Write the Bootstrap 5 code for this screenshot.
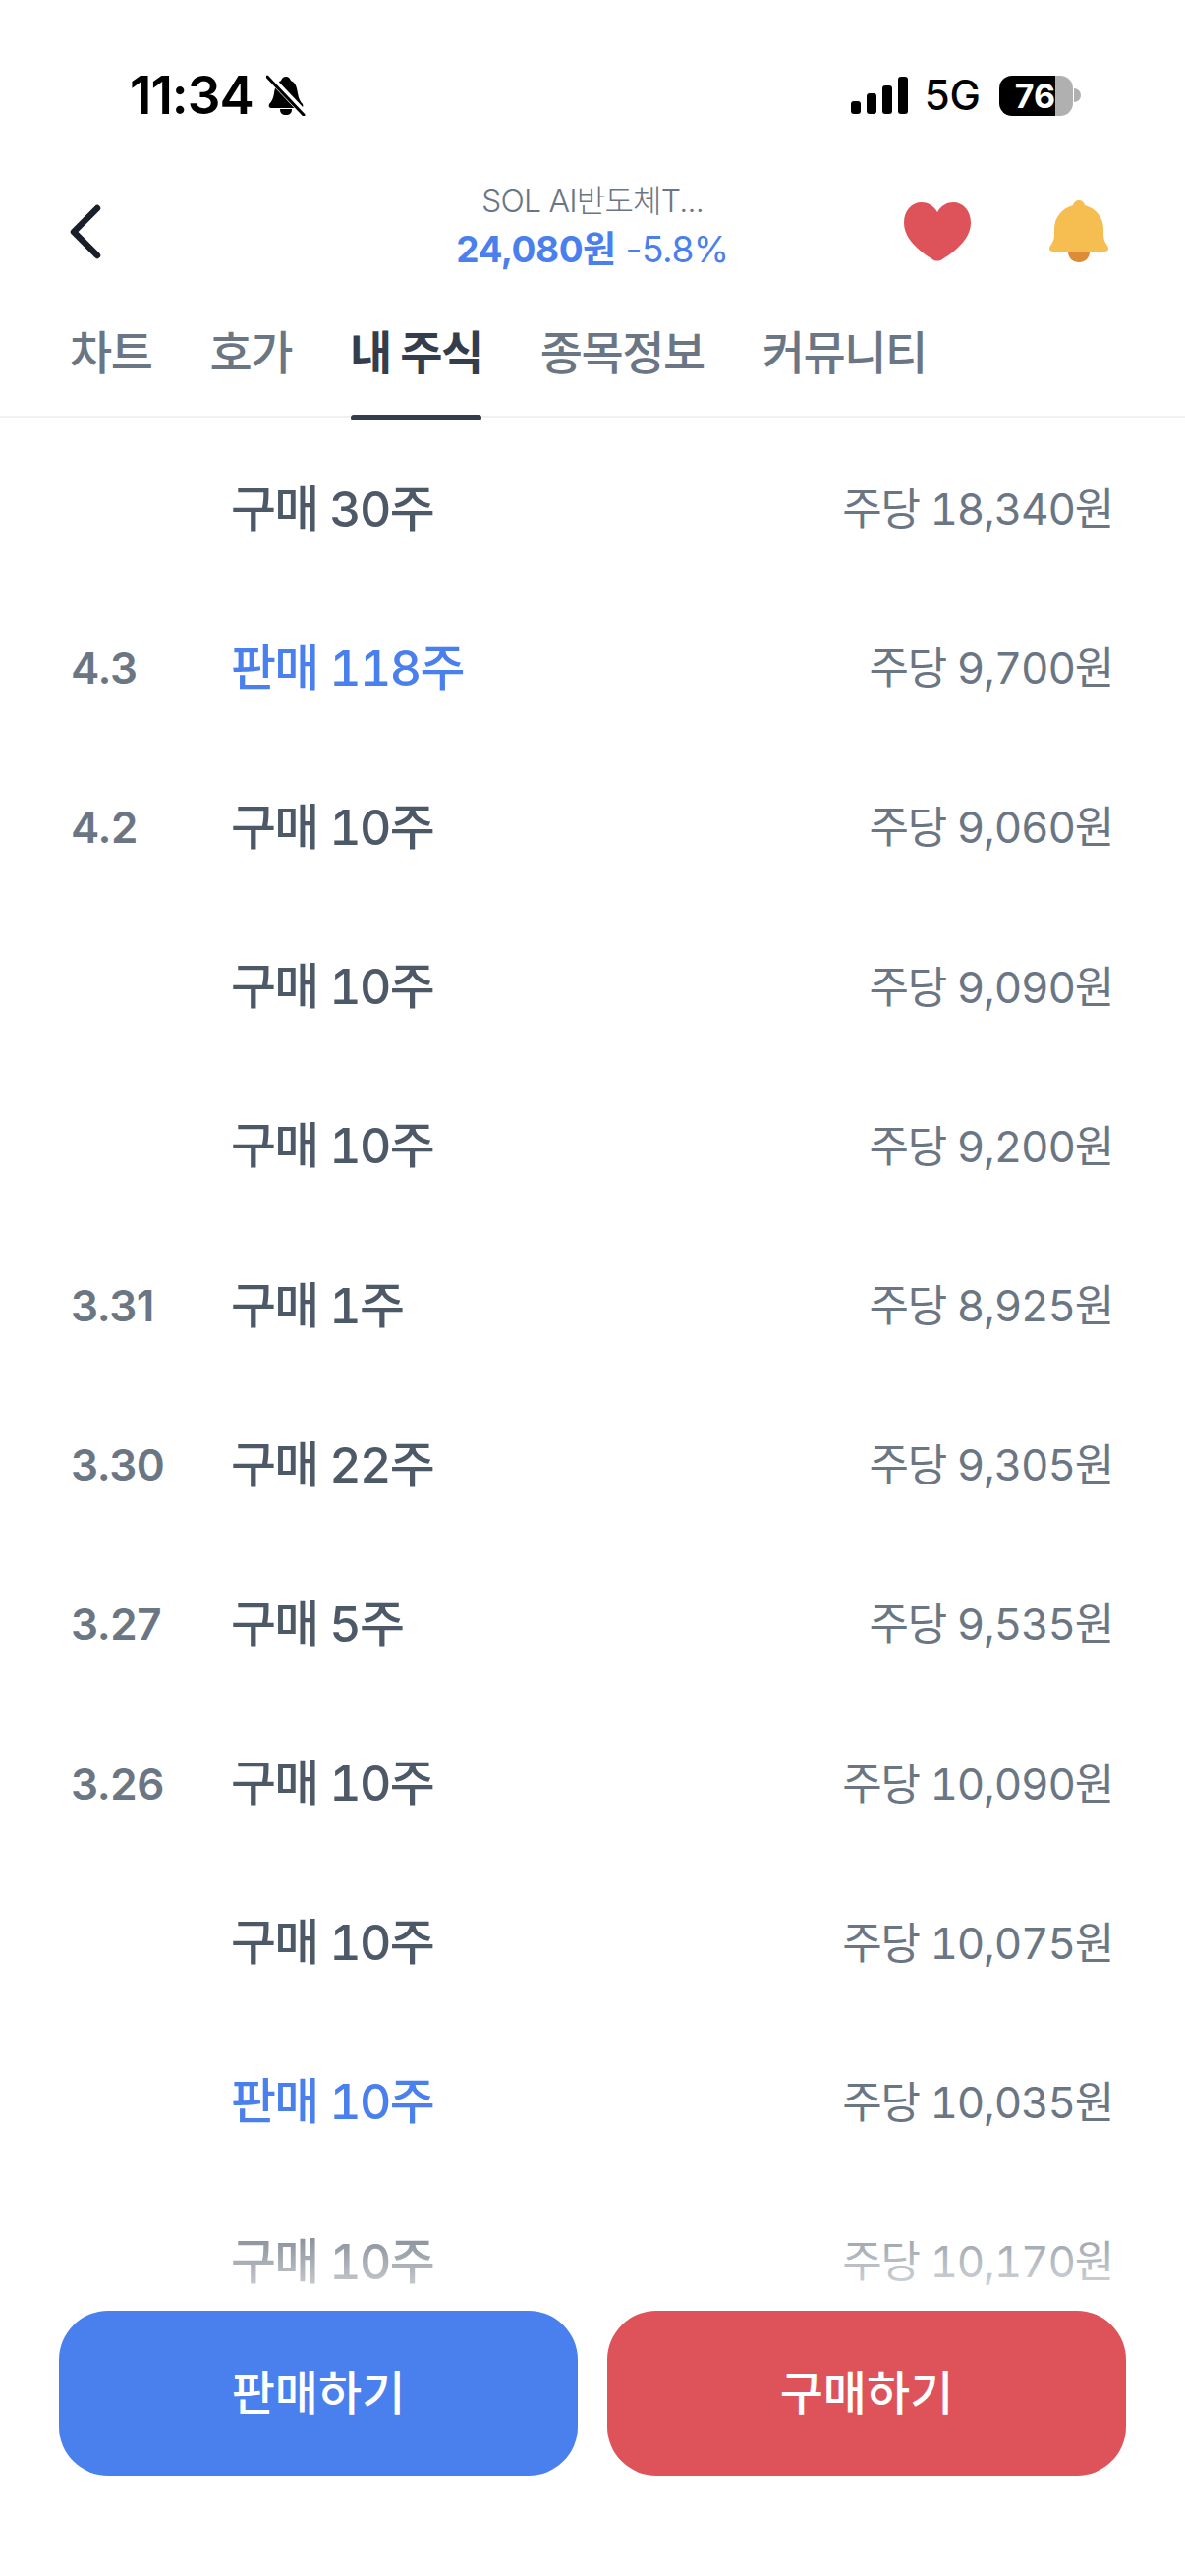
<!DOCTYPE html>
<html lang="ko">
<head>
  <meta charset="UTF-8" />
  <meta name="viewport" content="width=device-width, initial-scale=1.0"/>
  <title>내 주식</title>
  <link href="https://cdn.jsdelivr.net/npm/bootstrap@5.3.0/dist/css/bootstrap.min.css" rel="stylesheet"/>
  <style>
    body {
      font-family: Inter, "Noto Sans CJK KR", sans-serif;
      background: #fff;
      width: 1206px;
      height: 2622px;
      overflow: hidden;
      position: relative;
    }
    .status-bar { height: 169px; padding: 72px 106px 0 132px; }
    .status-time { font-size: 53px; font-weight: 600; line-height: 50px; letter-spacing: -1px; color: #000; margin-right: 13px; }
    .status-net { font-size: 42px; font-weight: 500; line-height: 50px; color: #000; margin: 0 19px 0 17px; }
    .battery {
      width: 75px; height: 41px; border-radius: 13px; font-size: 34px; font-weight: 700; line-height: 41px;
      color: #fff; padding-right: 18px; text-align: right;
      background: linear-gradient(90deg, #000 76%, #b0b0b0 76%);
    }
    .battery-tip { width: 7px; height: 14px; background: #b0b0b0; border-radius: 0 7px 7px 0; margin-left: 1px; }
    .top-bar { height: 134px; padding: 0 78px 0 71px; }
    .stock-name { font-size: 32px; line-height: 44px; font-weight: 300; color: #6b7684; letter-spacing: -.8px; }
    .stock-price { font-size: 37px; line-height: 54px; color: #4a80ed; letter-spacing: -.5px; }
    .stock-price b { font-weight: 700; }
    .stock-center { left: 0; right: 0; top: 14px; }
    .tab-bar { height: 122px; border-bottom: 2px solid #f0f1f3; padding: 0 71px; gap: 59px; }
    .tab-item { font-size: 47px; line-height: 56px; height: 122px; padding-top: 28px; font-weight: 500; color: #6b7684; position: relative; letter-spacing: -1.5px; }
    .tab-item.active-tab { color: #333d4b; font-weight: 700; }
    .tab-item.active-tab::after {
      content: ""; position: absolute; left: 1px; right: 1px; bottom: -3px; height: 6px; background: #333d4b; border-radius: 3px;
    }
    .trade-list { padding-top: 12px; }
    .trade-row { height: 162.2px; padding: 0 73px 0 72px; }
    .trade-date { width: 163px; font-size: 44px; font-weight: 600; color: #6b7684; letter-spacing: -.4px; }
    .trade-name { font-size: 50px; font-weight: 500; color: #4e5968; letter-spacing: -1.7px; font-variant-numeric: tabular-nums; }
    .trade-sell { color: #4a80ed; }
    .trade-price { font-size: 44px; font-weight: 400; color: #6b7684; letter-spacing: -1.2px; font-variant-numeric: tabular-nums; }
    .footer-fade { position: absolute; left: 0; right: 0; top: 2227px; height: 147px; background: linear-gradient(180deg, rgba(255,255,255,0), #fff); }
    .footer-bar { position: absolute; left: 0; right: 0; top: 2352px; bottom: 0; background: #fff; padding: 0 60px; gap: 30px; }
    .order-btn {
      flex: 1; height: 168px; border: 0; border-radius: 50px; font-size: 48px; font-weight: 500; color: #fff;
    }
    .order-sell { background: #4a80ed; }
    .order-buy { background: #de5359; }
    .order-btn:hover, .order-btn:active { color: #fff; }
    .order-sell:hover { background: #4a80ed; }
    .order-buy:hover { background: #de5359; }
    .header-icons { gap: 80px; }
  </style>
</head>
<body>

  <!-- Status bar -->
  <div class="status-bar d-flex align-items-start justify-content-between">
    <div class="d-flex align-items-center">
      <span class="status-time">11:34</span>
      <svg width="40" height="42" viewBox="0 0 40 42">
        <path d="M20 2c3 0 4 2 5 4 5 2 6 7 7 13 1 5 2 8 5 11 1 2 0 4-2 4H5c-2 0-3-2-2-4 3-3 4-6 5-11 1-6 2-11 7-13 1-2 2-4 5-4z" fill="#000"/>
        <path d="M14 35h12c0 4-2 6-6 6s-6-2-6-6z" fill="#000"/>
        <path d="M2 1 39 40" stroke="#fff" stroke-width="7"/>
        <path d="M1 2 38 41" stroke="#000" stroke-width="3" stroke-linecap="round"/>
      </svg>
    </div>
    <div class="d-flex align-items-center">
      <svg width="58" height="38" viewBox="0 0 58 38" fill="#000">
        <rect x="0" y="25" width="10" height="13" rx="3"/>
        <rect x="16" y="17" width="10" height="21" rx="3"/>
        <rect x="32" y="9" width="10" height="29" rx="3"/>
        <rect x="48" y="0" width="10" height="38" rx="3"/>
      </svg>
      <span class="status-net">5G</span>
      <span class="battery">76</span>
      <span class="battery-tip"></span>
    </div>
  </div>

  <!-- Stock header -->
  <div class="top-bar d-flex align-items-center justify-content-between position-relative">
    <svg width="32" height="56" viewBox="0 0 32 56" fill="none">
      <path d="M28 4 4 28l24 24" stroke="#191f28" stroke-width="6.5" stroke-linecap="round" stroke-linejoin="round"/>
    </svg>
    <div class="stock-center position-absolute text-center">
      <div class="stock-name">SOL AI반도체T...</div>
      <div class="stock-price"><b>24,080원</b> -5.8%</div>
    </div>
    <div class="header-icons d-flex align-items-center position-relative">
      <svg width="68" height="60" viewBox="0 0 68 60">
        <path d="M34 10C30 3 24 0 18 0 8 0 0 8 0 21c0 16 16 29 29 37 3 2 7 2 10 0 13-8 29-21 29-37C68 8 60 0 50 0c-6 0-12 3-16 10z" fill="#de5359"/>
      </svg>
      <svg width="60" height="64" viewBox="0 0 60 64">
        <path d="M19 52h22c0 7-5 11-11 11s-11-4-11-11z" fill="#dc8c35"/>
        <path d="M30 0c3 0 5.500 2 6 5C47 8 55 17 55 29v6c0 5 2 8 4 11 2 3 1 6-3 6H4c-4 0-5-3-3-6 2-3 4-6 4-11v-6C5 17 13 8 24 5c.5-3 3-5 6-5z" fill="#f6be50"/>
      </svg>
    </div>
  </div>

  <!-- Tabs -->
  <div class="tab-bar d-flex">
    <div class="tab-item">차트</div>
    <div class="tab-item">호가</div>
    <div class="tab-item active-tab">내 주식</div>
    <div class="tab-item">종목정보</div>
    <div class="tab-item">커뮤니티</div>
  </div>

  <!-- Trades -->
  <div class="trade-list">
    <div class="trade-row d-flex align-items-center"><div class="trade-date"></div><div class="trade-name">구매 30주</div><div class="trade-price ms-auto">주당 18,340원</div></div>
    <div class="trade-row d-flex align-items-center"><div class="trade-date">4.3</div><div class="trade-name trade-sell">판매 118주</div><div class="trade-price ms-auto">주당 9,700원</div></div>
    <div class="trade-row d-flex align-items-center"><div class="trade-date">4.2</div><div class="trade-name">구매 10주</div><div class="trade-price ms-auto">주당 9,060원</div></div>
    <div class="trade-row d-flex align-items-center"><div class="trade-date"></div><div class="trade-name">구매 10주</div><div class="trade-price ms-auto">주당 9,090원</div></div>
    <div class="trade-row d-flex align-items-center"><div class="trade-date"></div><div class="trade-name">구매 10주</div><div class="trade-price ms-auto">주당 9,200원</div></div>
    <div class="trade-row d-flex align-items-center"><div class="trade-date">3.31</div><div class="trade-name">구매 1주</div><div class="trade-price ms-auto">주당 8,925원</div></div>
    <div class="trade-row d-flex align-items-center"><div class="trade-date">3.30</div><div class="trade-name">구매 22주</div><div class="trade-price ms-auto">주당 9,305원</div></div>
    <div class="trade-row d-flex align-items-center"><div class="trade-date">3.27</div><div class="trade-name">구매 5주</div><div class="trade-price ms-auto">주당 9,535원</div></div>
    <div class="trade-row d-flex align-items-center"><div class="trade-date">3.26</div><div class="trade-name">구매 10주</div><div class="trade-price ms-auto">주당 10,090원</div></div>
    <div class="trade-row d-flex align-items-center"><div class="trade-date"></div><div class="trade-name">구매 10주</div><div class="trade-price ms-auto">주당 10,075원</div></div>
    <div class="trade-row d-flex align-items-center"><div class="trade-date"></div><div class="trade-name trade-sell">판매 10주</div><div class="trade-price ms-auto">주당 10,035원</div></div>
    <div class="trade-row d-flex align-items-center"><div class="trade-date"></div><div class="trade-name">구매 10주</div><div class="trade-price ms-auto">주당 10,170원</div></div>
  </div>

  <!-- Order buttons -->
  <div class="footer-fade"></div>
  <div class="footer-bar d-flex align-items-start">
    <button class="btn order-btn order-sell">판매하기</button>
    <button class="btn order-btn order-buy">구매하기</button>
  </div>

  <script src="https://cdn.jsdelivr.net/npm/bootstrap@5.3.0/dist/js/bootstrap.bundle.min.js"></script>
</body>
</html>
